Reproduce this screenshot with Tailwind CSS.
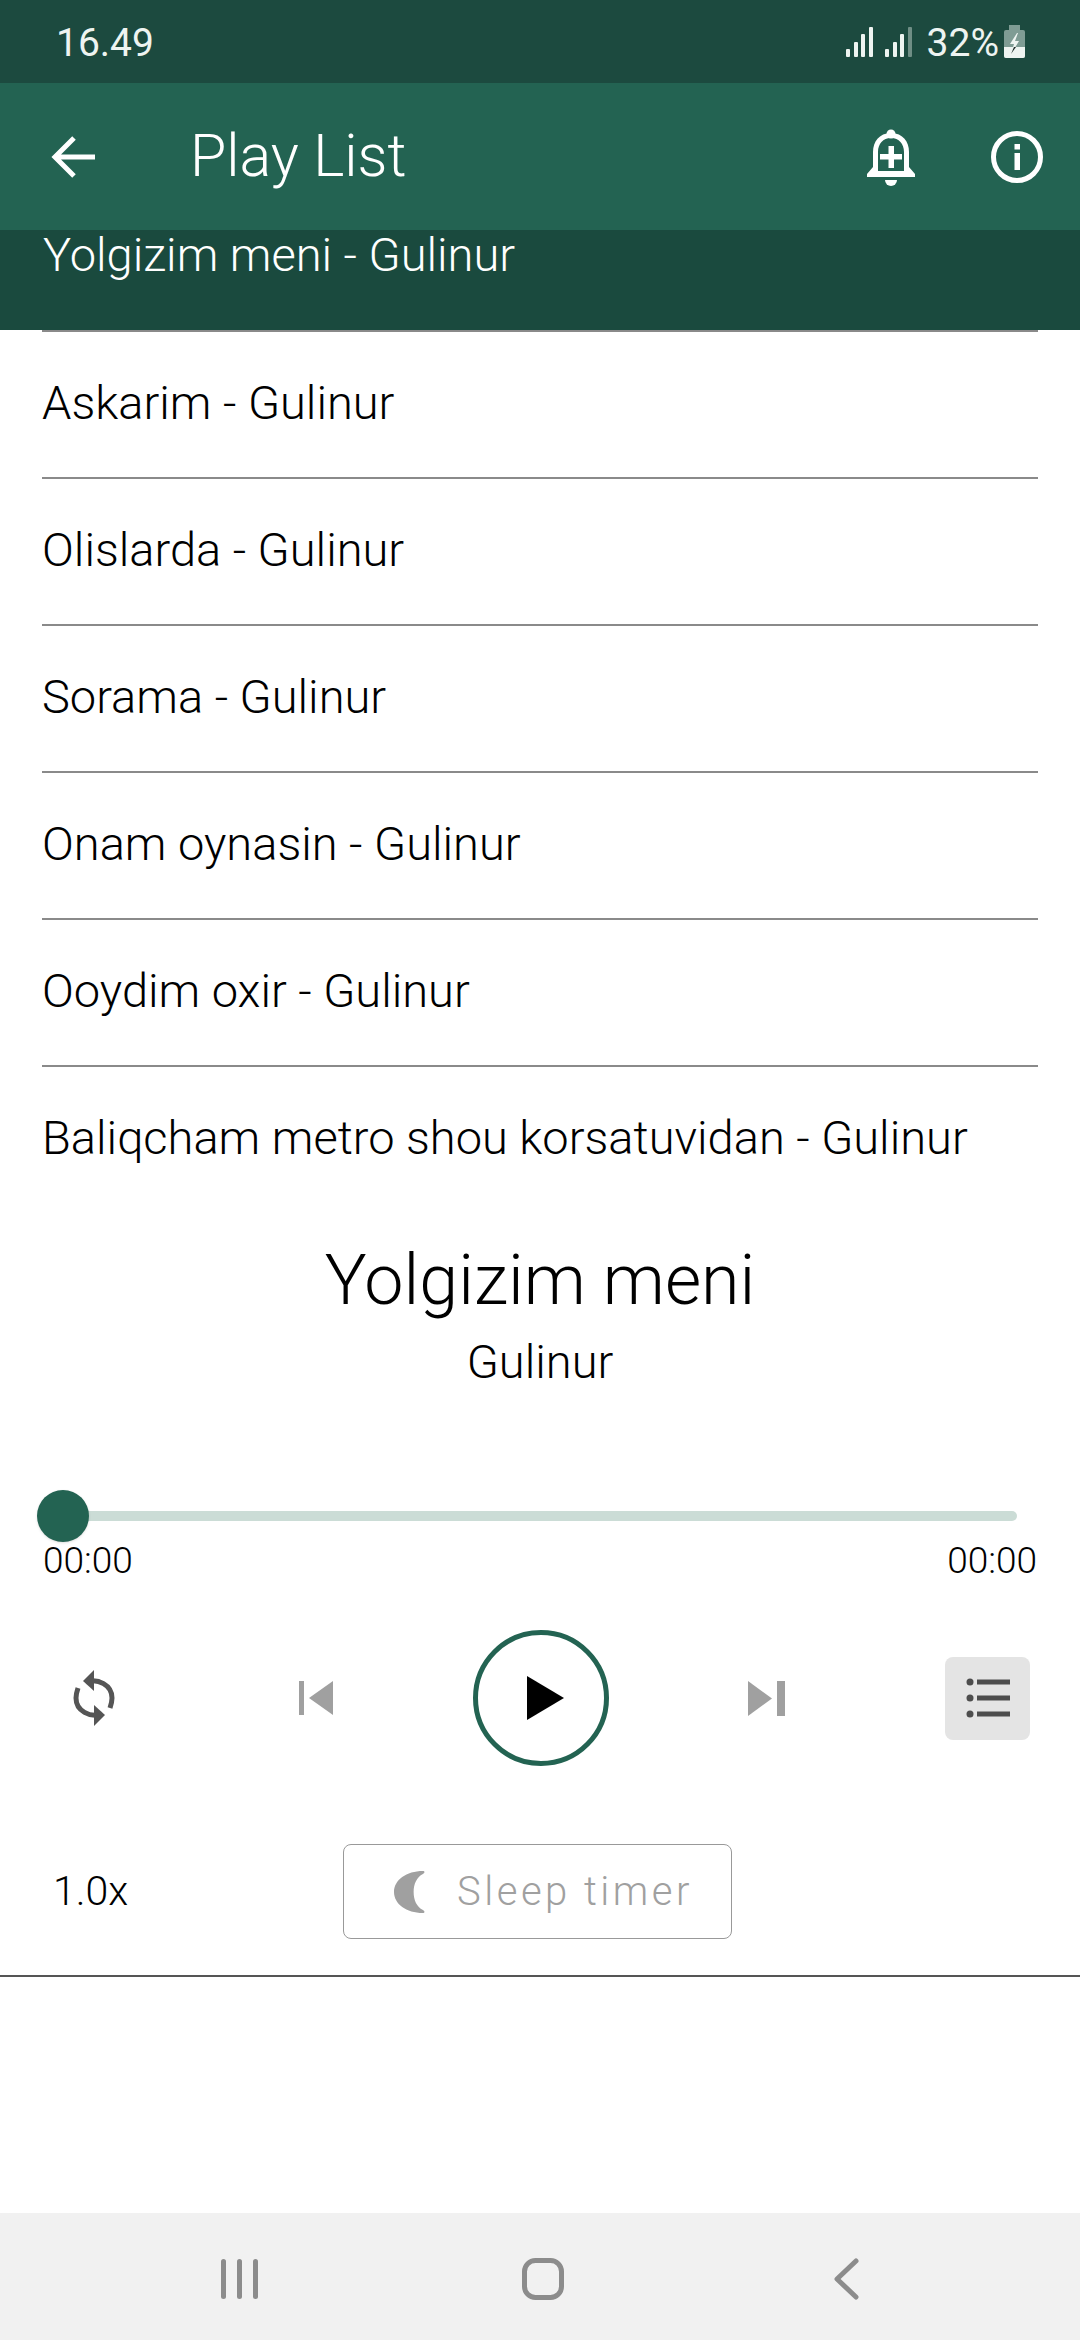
<!DOCTYPE html>
<html lang="en">
<head>
    <meta charset="UTF-8">
    <meta name="viewport" content="width=device-width, initial-scale=1.0">
    <title>Play List</title>
    <script src="https://cdn.jsdelivr.net/npm/@tailwindcss/browser@4"></script>
</head>
<body class="bg-white">
    <div class="w-[1080px] h-[2340px] flex flex-col overflow-hidden font-['Roboto',sans-serif] font-light text-black">

        <!-- status bar -->
        <div class="h-[83px] shrink-0 bg-[#1c4a3f] flex items-center text-[#eef4f1] font-normal text-[39px]">
            <span class="ml-[56px] mt-[4px]">16.49</span>
            <svg class="ml-auto" width="27" height="30" viewBox="0 0 27 30" fill="#eef4f1"><rect x="0" y="22" width="4" height="8" rx="1"/><rect x="8" y="15" width="4" height="15" rx="1"/><rect x="15" y="7" width="4" height="23" rx="1"/><rect x="23" y="0" width="4" height="30" rx="1"/></svg>
            <svg class="ml-[12px]" width="27" height="30" viewBox="0 0 27 30" fill="#eef4f1"><rect x="0" y="22" width="4" height="8" rx="1"/><rect x="8" y="15" width="4" height="15" rx="1"/><rect x="15" y="7" width="4" height="23" rx="1"/><rect x="23" y="0" width="4" height="30" rx="1" opacity="0.4"/></svg>
            <span class="ml-[15px] mt-[3px]">32%</span>
            <svg class="ml-[5px] mr-[55px]" width="21" height="33" viewBox="0 0 21 33"><rect x="5" y="0" width="11" height="5" fill="#7f9c94"/><rect x="0" y="5" width="21" height="28" rx="2" fill="#7f9c94"/><path d="M0 22h21v9a2 2 0 0 1-2 2H2a2 2 0 0 1-2-2z" fill="#eef4f1"/><path d="M13 8l-7 11h4l-3 10 8-13h-4l3-8z" fill="#eef4f1"/><path d="M10 22l-3 7 5-7z" fill="#1c2a26"/></svg>
        </div>

        <!-- app bar -->
        <div class="h-[147px] shrink-0 bg-[#236352] flex items-center text-white">
            <svg class="ml-[51px]" width="44" height="44" viewBox="0 0 44 44" fill="none" stroke="white" stroke-width="5"><path d="M44 22H4M23 3L4 22l19 19"/></svg>
            <span class="ml-[95px] text-[59px] leading-none pb-[2px]">Play List</span>
            <svg class="ml-auto mt-[3px]" width="48" height="58" viewBox="0 0 48 58" fill="white"><circle cx="24" cy="5" r="4.5"/><path d="M24 4C12 4 6 13 6 23v15l-6 7v3h48v-3l-6-7V23C42 13 36 4 24 4zm0 5c8 0 13 6 13 14v19H11V23c0-8 5-14 13-14z" fill-rule="evenodd"/><rect x="21.5" y="17" width="5.5" height="22"/><rect x="13" y="25" width="22" height="5.5"/><path d="M18 51h12a6 6 0 0 1-12 0z"/></svg>
            <svg class="ml-[76px] mr-[37px]" width="52" height="52" viewBox="0 0 52 52"><circle cx="26" cy="26" r="23.5" fill="none" stroke="white" stroke-width="5"/><rect x="23.5" y="22" width="5.5" height="17" fill="white"/><rect x="23.5" y="13" width="5.5" height="5.5" fill="white"/></svg>
        </div>

        <!-- play list -->
        <div class="text-[47px] leading-none">
            <div class="h-[100px] bg-[#1a4a3e] text-white px-[43px]">
                <p class="leading-[50px]">Yolgizim meni - Gulinur</p>
            </div>
            <div class="mx-[42px] h-[147px] flex items-center border-t-2 border-[#8a8a8a]"><span class="pb-[5px]">Askarim - Gulinur</span></div>
            <div class="mx-[42px] h-[147px] flex items-center border-t-2 border-[#8a8a8a]"><span class="pb-[5px]">Olislarda - Gulinur</span></div>
            <div class="mx-[42px] h-[147px] flex items-center border-t-2 border-[#8a8a8a]"><span class="pb-[5px]">Sorama - Gulinur</span></div>
            <div class="mx-[42px] h-[147px] flex items-center border-t-2 border-[#8a8a8a]"><span class="pb-[5px]">Onam oynasin - Gulinur</span></div>
            <div class="mx-[42px] h-[147px] flex items-center border-t-2 border-[#8a8a8a]"><span class="pb-[5px]">Ooydim oxir - Gulinur</span></div>
            <div class="mx-[42px] h-[147px] flex items-center border-t-2 border-[#8a8a8a]"><span class="pb-[5px]">Baliqcham metro shou korsatuvidan - Gulinur</span></div>
        </div>

        <!-- now playing -->
        <div class="text-center">
            <p class="text-[70px] leading-[84px] mt-[26px]">Yolgizim meni</p>
            <p class="text-[47px] leading-[56px] mt-[12px]">Gulinur</p>
        </div>

        <!-- seek bar -->
        <div class="relative mt-[121px] ml-[63px] mr-[63px] h-[10px] bg-[#cbdcd6] rounded-full shrink-0">
            <div class="absolute left-[-26px] top-[-21px] w-[52px] h-[52px] rounded-full bg-[#236352] shadow-sm"></div>
        </div>
        <div class="flex justify-between mt-[20px] px-[43px] text-[37px] leading-[40px]">
            <span>00:00</span>
            <span>00:00</span>
        </div>

        <!-- controls -->
        <div class="flex items-center mt-[49px] h-[136px] shrink-0">
            <svg class="ml-[72px]" width="44" height="58" viewBox="0 0 44 58" fill="none"><path d="M14 13c12-4 26 3 26 16 0 4-1 7-2 10" stroke="#555555" stroke-width="5"/><path d="M30 45C18 49 4 42 4 29c0-4 1-7 2-10" stroke="#555555" stroke-width="5"/><path d="M22 1L11 12l11 10z" fill="#555555"/><path d="M22 57l11-11-11-10z" fill="#555555"/></svg>
            <svg class="ml-[183px]" width="34" height="34" viewBox="0 0 34 34" fill="#a0a0a0"><rect x="0" y="0" width="5" height="34"/><path d="M34 0v34L10 17z"/></svg>
            <div class="ml-[140px] w-[136px] h-[136px] rounded-full border-[5px] border-[#236352] flex items-center justify-center">
                <svg class="ml-[9px]" width="37" height="44" viewBox="0 0 37 44" fill="black"><path d="M0 0l37 22L0 44z"/></svg>
            </div>
            <svg class="ml-[139px]" width="37" height="35" viewBox="0 0 37 35" fill="#a0a0a0"><path d="M0 0v35l24-17.500z"/><rect x="29" y="0" width="8" height="35"/></svg>
            <div class="ml-[160px] w-[85px] h-[83px] rounded-lg bg-[#e4e4e4] flex items-center justify-center">
                <svg width="44" height="40" viewBox="0 0 44 40" fill="#4d4d4d"><circle cx="4" cy="4" r="3.500"/><rect x="11" y="1.500" width="33" height="5"/><circle cx="4" cy="20" r="3.500"/><rect x="11" y="17.500" width="33" height="5"/><circle cx="4" cy="36" r="3.500"/><rect x="11" y="33.500" width="33" height="5"/></svg>
            </div>
        </div>

        <!-- speed and sleep timer -->
        <div class="flex items-center mt-[78px] shrink-0">
            <span class="ml-[53px] w-[290px] text-[41px]">1.0x</span>
            <div class="w-[389px] h-[95px] border border-[#999999] rounded-lg flex items-center text-[#a0a0a0]">
                <svg class="ml-[50px]" width="31" height="42" viewBox="0 0 30 42" preserveAspectRatio="none" fill="#a0a0a0"><path d="M28 0C12 0 0 9 0 21s12 21 28 21c2 0 2-2 0-3-6-3-9-10-9-18S22 6 28 3c2-1 2-3 0-3z"/></svg>
                <span class="ml-[32px] text-[40px] tracking-[3.500px] leading-none">Sleep timer</span>
            </div>
        </div>

        <div class="mt-[36px] h-[2px] bg-[#555555] shrink-0"></div>

        <!-- nav bar -->
        <div class="mt-auto h-[127px] shrink-0 bg-[#f1f1f1] flex items-center pt-[5px]">
            <svg class="ml-[221px]" width="39" height="40" viewBox="0 0 39 40" fill="#8c8c8c"><rect x="0" y="0" width="5" height="40" rx="2.500"/><rect x="16" y="0" width="5" height="40" rx="2.500"/><rect x="32" y="0" width="5" height="40" rx="2.500"/></svg>
            <svg class="ml-[262px]" width="42" height="42" viewBox="0 0 42 42" fill="none" stroke="#8c8c8c" stroke-width="5"><rect x="2.500" y="2.500" width="37" height="37" rx="11"/></svg>
            <svg class="ml-[269px]" width="26" height="42" viewBox="0 0 26 42" fill="none" stroke="#8c8c8c" stroke-width="5" stroke-linecap="round" stroke-linejoin="round"><path d="M23 3L4 21l19 18"/></svg>
        </div>
    </div>
</body>
</html>
